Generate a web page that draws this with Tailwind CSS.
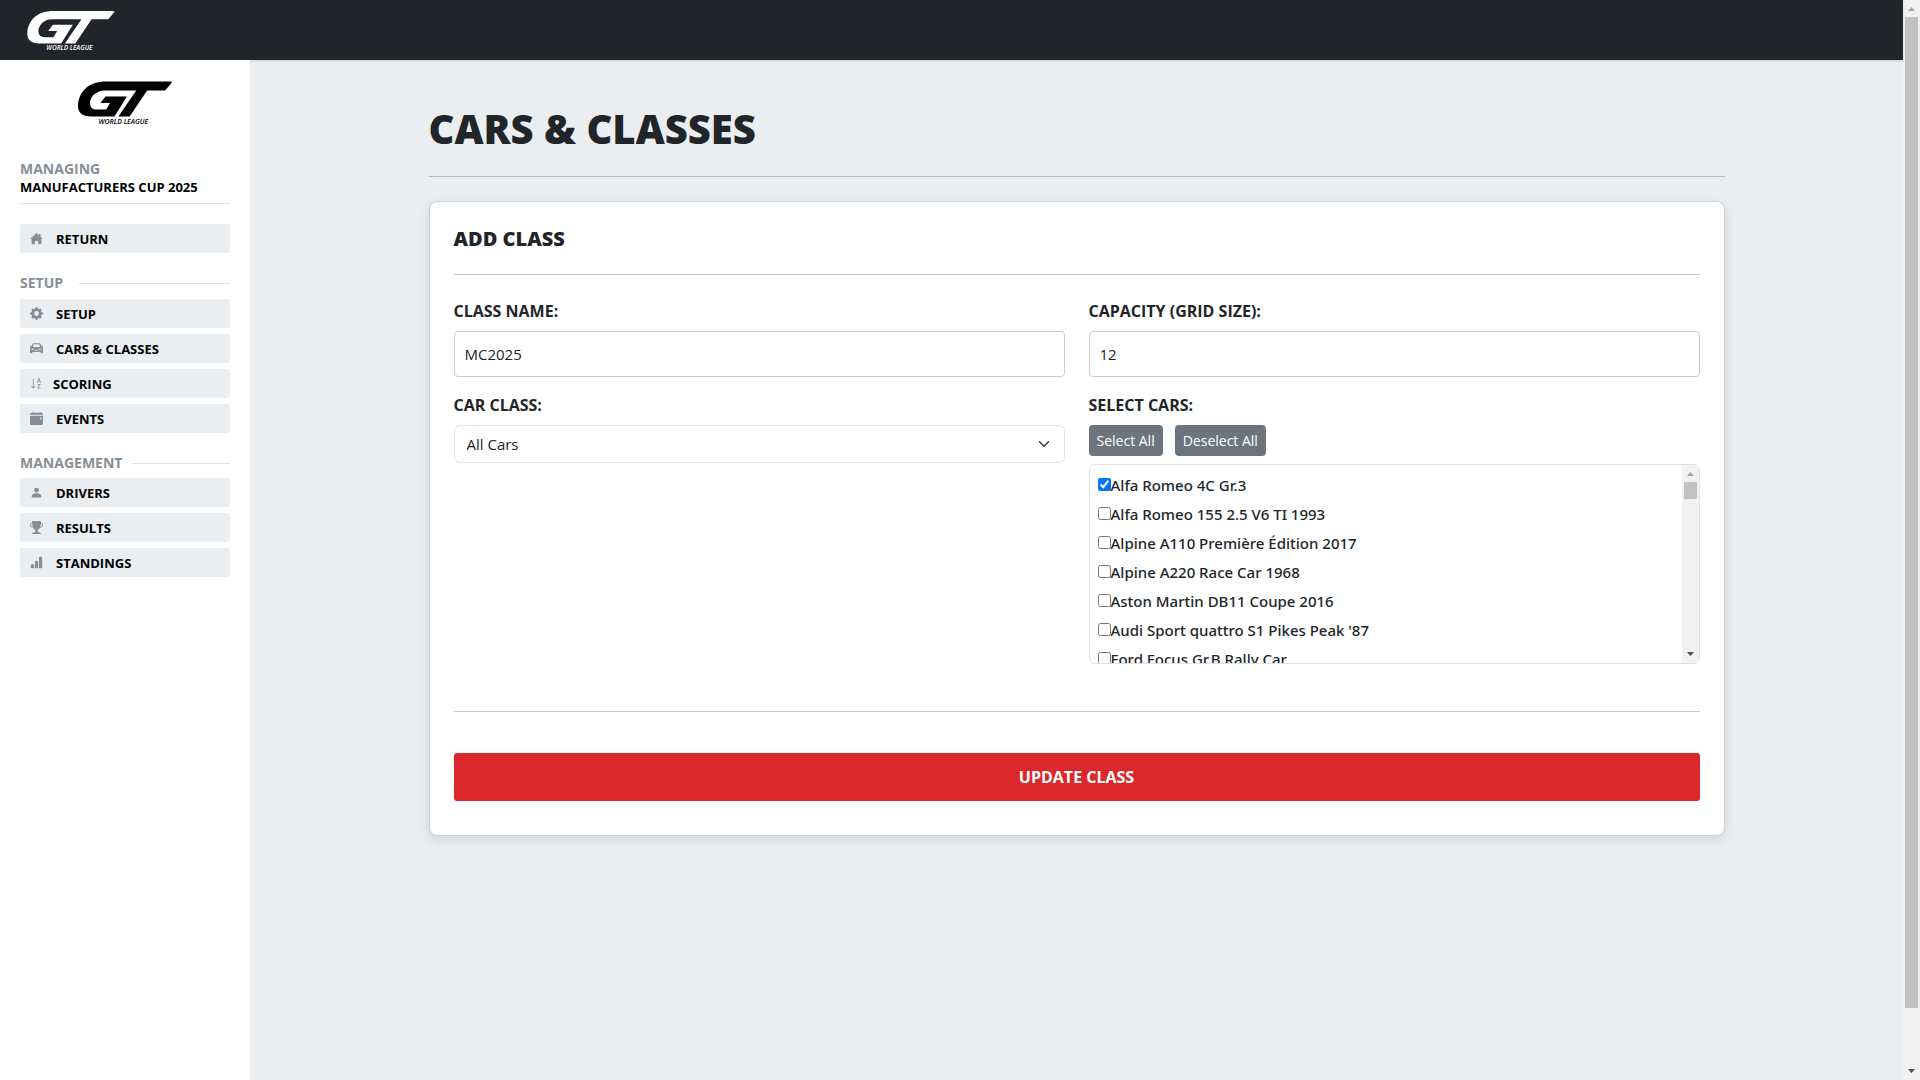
<!DOCTYPE html>
<html lang="en">
<head>
<meta charset="utf-8">
<meta name="viewport" content="width=device-width, initial-scale=1">
<title>Cars &amp; Classes</title>
<script src="https://cdn.jsdelivr.net/npm/@tailwindcss/browser@4"></script>
</head>
<body class="flex h-screen overflow-hidden bg-[#eaeef1] font-['Open_Sans','Noto_Sans',sans-serif] text-[#212529]">
<svg class="hidden" aria-hidden="true">
  <symbol id="logo" viewBox="234 243 284 130">
    <path d="M512 243Q520 243 516 248L497 270H443L390 349H356L410 270H314C288 270 270 290 270 309Q271 328 290 328H319L331 308H302L317 288H382L344 349H274C245 349 233 336 234 314C237 270 270 243 318 243Z"/>
    <text x="296" y="370" font-size="21" font-weight="600" font-style="italic" font-family="'Open Sans',sans-serif">WORLD LEAGUE</text>
  </symbol>
</svg>

<div class="flex min-w-0 flex-1 flex-col">
  <header class="z-10 flex h-[60px] shrink-0 items-center bg-[#212529] px-[27px] pt-0.5 shadow-sm">
    <a href="#" aria-label="GT World League"><svg class="h-10 w-[88px] fill-white"><use href="#logo"/></svg></a>
  </header>

  <div class="flex min-h-0 flex-1">
    <aside class="z-20 flex w-[250px] shrink-0 flex-col bg-white px-5 pt-[21px] text-[13px] leading-[18px] font-bold text-black">
      <a href="#" class="mx-auto" aria-label="GT World League"><svg class="h-11 w-[94px] fill-black"><use href="#logo"/></svg></a>
      <div class="mt-[35px] border-b border-[#dee2e6] pb-[7px]">
        <p class="text-sm leading-[18px] text-[#868e96]">MANAGING</p>
        <p>MANUFACTURERS CUP 2025</p>
      </div>
      <nav class="mt-5 flex flex-col gap-1.5">
        <a href="#" class="flex h-[29px] items-center rounded-[3px] bg-[#eaeef1] px-2.5"><svg class="mr-[13px] size-[13px] fill-[#868e96]" viewBox="0 0 16 16"><path d="M8.7 1.5a1 1 0 0 0-1.4 0L.6 8.1l.8.8L8 2.3l6.6 6.6.8-.8L13 5.7V2.5h-2v1.3z"/><path d="m8 2.300 6 6v5.200a1.5 1.5 0 0 1-1.500 1.500H10v-4H6v4H3.500A1.500 1.500 0 0 1 2 13.500V8.300z"/></svg>RETURN</a>
      </nav>
      <div class="mt-[21px] flex items-center gap-4 text-sm leading-[18px] text-[#868e96]"><h2>SETUP</h2><span class="h-px flex-1 bg-[#dee2e6]"></span></div>
      <nav class="mt-[7px] flex flex-col gap-1.5">
        <a href="#" class="flex h-[29px] items-center rounded-[3px] bg-[#eaeef1] px-2.5"><svg class="mr-[13px] size-[13px] fill-[#868e96]" viewBox="0 0 16 16"><path d="M9.405 1.050c-.413-1.400-2.397-1.400-2.810 0l-.1.340a1.464 1.464 0 0 1-2.105.872l-.310-.170c-1.283-.698-2.686.705-1.987 1.987l.169.311c.446.820.023 1.841-.872 2.105l-.340.100c-1.400.413-1.400 2.397 0 2.810l.340.100a1.464 1.464 0 0 1 .872 2.105l-.170.310c-.698 1.283.705 2.686 1.987 1.987l.311-.169a1.464 1.464 0 0 1 2.105.872l.100.340c.413 1.400 2.397 1.400 2.810 0l.100-.340a1.464 1.464 0 0 1 2.105-.872l.310.170c1.283.698 2.686-.705 1.987-1.987l-.169-.311a1.464 1.464 0 0 1 .872-2.105l.340-.100c1.400-.413 1.400-2.397 0-2.810l-.340-.100a1.464 1.464 0 0 1-.872-2.105l.170-.310c.698-1.283-.705-2.686-1.987-1.987l-.311.169a1.464 1.464 0 0 1-2.105-.872zM8 10.930a2.929 2.929 0 1 1 0-5.860 2.929 2.929 0 0 1 0 5.858z"/></svg>SETUP</a>
        <a href="#" class="flex h-[29px] items-center rounded-[3px] bg-[#eaeef1] px-2.5"><svg class="mr-[13px] size-[13px] fill-[#868e96]" viewBox="0 0 16 16"><path fill-rule="evenodd" d="M4.800 1.500h6.400q1.300 0 1.900 1.200L14.300 5H16v1.200l-.8.500q.8.900.8 2.300V13q0 .8-.8.800h-1.400q-.8 0-.8-.8v-.8H3v.8q0 .8-.8.800H.8Q0 13.800 0 13V9q0-1.400.8-2.300L0 6.200V5h1.700l1.200-2.300q.6-1.200 1.900-1.200zM4.700 2.900 3.500 6h9l-1.200-3.100zM2 8.200v1.400h2.800V8.200zm9.200 0v1.400H14V8.200zM5.500 9.500v1h5v-1z"/></svg>CARS &amp; CLASSES</a>
        <a href="#" class="flex h-[29px] items-center rounded-[3px] bg-[#eaeef1] px-2.5"><svg class="mr-[10px] size-[13px] fill-[#868e96]" viewBox="0 0 16 16"><path fill-rule="evenodd" d="M10.082 5.629 9.664 7H8.598l1.789-5.332h1.234L13.402 7h-1.120l-.419-1.371zm1.570-.785L11 2.687h-.047l-.652 2.157z"/><path d="M12.960 14H9.028v-.691l2.579-3.720v-.054H9.098v-.867h3.785v.691l-2.567 3.720v.054h2.645zM4.500 2.500a.5.500 0 0 0-1 0v9.793l-1.146-1.147a.5.500 0 0 0-.708.708l2 1.999.007.007a.497.497 0 0 0 .7-.006l2-2a.5.500 0 0 0-.707-.708L4.500 12.293z"/></svg>SCORING</a>
        <a href="#" class="flex h-[29px] items-center rounded-[3px] bg-[#eaeef1] px-2.5"><svg class="mr-[13px] size-[13px] fill-[#868e96]" viewBox="0 0 16 16"><path fill-rule="evenodd" d="M4 .5V0H3v1H2a2 2 0 0 0-2 2v.5h16V3a2 2 0 0 0-2-2h-1V0h-1v1H4zM16 14V4.500H0V14a2 2 0 0 0 2 2h12a2 2 0 0 0 2-2zM12.500 7h1q.5 0 .5.500v1q0 .5-.5.500h-1q-.5 0-.5-.5v-1q0-.5.5-.5z"/></svg>EVENTS</a>
      </nav>
      <div class="mt-[21px] flex items-center gap-2.5 text-sm leading-[18px] text-[#868e96]"><h2>MANAGEMENT</h2><span class="h-px flex-1 bg-[#dee2e6]"></span></div>
      <nav class="mt-1.5 flex flex-col gap-1.5">
        <a href="#" class="flex h-[29px] items-center rounded-[3px] bg-[#eaeef1] px-2.5"><svg class="mr-[13px] size-[13px] fill-[#868e96]" viewBox="0 0 16 16"><path d="M3 14s-1 0-1-1 1-4 6-4 6 3 6 4-1 1-1 1zm5-6a3 3 0 1 0 0-6 3 3 0 0 0 0 6"/></svg>DRIVERS</a>
        <a href="#" class="flex h-[29px] items-center rounded-[3px] bg-[#eaeef1] px-2.5"><svg class="mr-[13px] size-[13px] fill-[#868e96]" viewBox="0 0 16 16"><path d="M2.500.5A.5.500 0 0 1 3 0h10a.5.500 0 0 1 .5.500q0 .807-.034 1.536a3 3 0 1 1-1.133 5.890c-.790 1.865-1.878 2.777-2.833 3.011v2.173l1.425.356c.194.048.377.135.537.255L13.300 15.100a.5.500 0 0 1-.3.900H3a.5.500 0 0 1-.3-.9l1.838-1.379c.160-.120.343-.207.537-.255L6.500 13.110v-2.173c-.955-.234-2.043-1.146-2.833-3.012a3 3 0 1 1-1.132-5.890A33 33 0 0 1 2.500.5m.099 2.540a2 2 0 0 0 .720 3.935c-.333-1.050-.588-2.346-.720-3.935m10.083 3.935a2 2 0 0 0 .720-3.935c-.133 1.590-.388 2.885-.720 3.935"/></svg>RESULTS</a>
        <a href="#" class="flex h-[29px] items-center rounded-[3px] bg-[#eaeef1] px-2.5"><svg class="mr-[13px] size-[13px] fill-[#868e96]" viewBox="0 0 16 16"><path d="M1 11a1 1 0 0 1 1-1h2a1 1 0 0 1 1 1v3a1 1 0 0 1-1 1H2a1 1 0 0 1-1-1zm5-4a1 1 0 0 1 1-1h2a1 1 0 0 1 1 1v7a1 1 0 0 1-1 1H7a1 1 0 0 1-1-1zm5-5a1 1 0 0 1 1-1h2a1 1 0 0 1 1 1v12a1 1 0 0 1-1 1h-2a1 1 0 0 1-1-1z"/></svg>STANDINGS</a>
      </nav>
    </aside>

    <main class="min-w-0 flex-1 overflow-hidden px-3 pt-[45px]">
      <div class="mx-auto max-w-[1296px]">
        <h1 class="text-[40px] leading-12 font-extrabold">CARS &amp; CLASSES</h1>
        <hr class="mt-[23px] border-[#b8bdc0]">
        <form class="mt-6 rounded-lg border border-[#cdd0d3] bg-white px-6 pt-[23px] pb-[34px] shadow-[0_4px_12px_rgba(0,0,0,0.1)]">
          <h2 class="text-xl leading-7 font-extrabold">ADD CLASS</h2>
          <hr class="mt-[21px] border-[#c7c8c9]">
          <div class="mt-6 grid grid-cols-2 gap-x-6 gap-y-4">
            <div>
              <label for="name" class="block text-base leading-6 font-bold">CLASS NAME:</label>
              <input id="name" type="text" value="MC2025" class="mt-2 block h-[46px] w-full rounded border border-[#ccc] px-2.5 text-[15px]">
            </div>
            <div>
              <label for="capacity" class="block text-base leading-6 font-bold">CAPACITY (GRID SIZE):</label>
              <input id="capacity" type="text" value="12" class="mt-2 block h-[46px] w-full rounded border border-[#ccc] px-2.5 text-[15px]">
            </div>
            <div>
              <label for="carclass" class="block text-base leading-6 font-bold">CAR CLASS:</label>
              <div class="relative mt-2">
                <select id="carclass" class="block h-[38px] w-full appearance-none rounded-md border border-[#dee2e6] bg-white px-3 text-[15px]"><option>All Cars</option></select>
                <svg class="pointer-events-none absolute top-[13px] right-[15px] size-3 fill-none stroke-[#343a40]" viewBox="0 0 16 16"><path stroke-linecap="round" stroke-linejoin="round" stroke-width="2" d="m2 5 6 6 6-6"/></svg>
              </div>
            </div>
            <div>
              <p id="cars" class="text-base leading-6 font-bold">SELECT CARS:</p>
              <div class="mt-2 flex gap-3 text-sm text-white">
                <button type="button" class="h-[31px] rounded bg-[#6c757d] px-2">Select All</button>
                <button type="button" class="h-[31px] rounded bg-[#6c757d] px-2">Deselect All</button>
              </div>
              <div role="group" aria-labelledby="cars" class="mt-2 flex h-[200px] overflow-hidden rounded-md border border-[#dee2e6]">
                <div class="flex-1 overflow-y-auto px-2 pt-1.5 font-['Noto_Sans','Open_Sans',sans-serif] text-[15px] leading-[29px] font-medium [scrollbar-width:none]">
                  <label class="flex items-center"><input type="checkbox" checked class="mb-0.5 size-[13px]">Alfa Romeo 4C Gr.3</label>
                  <label class="flex items-center"><input type="checkbox" class="mb-0.5 size-[13px]">Alfa Romeo 155 2.5 V6 TI 1993</label>
                  <label class="flex items-center"><input type="checkbox" class="mb-0.5 size-[13px]">Alpine A110 Première Édition 2017</label>
                  <label class="flex items-center"><input type="checkbox" class="mb-0.5 size-[13px]">Alpine A220 Race Car 1968</label>
                  <label class="flex items-center"><input type="checkbox" class="mb-0.5 size-[13px]">Aston Martin DB11 Coupe 2016</label>
                  <label class="flex items-center"><input type="checkbox" class="mb-0.5 size-[13px]">Audi Sport quattro S1 Pikes Peak '87</label>
                  <label class="flex items-center"><input type="checkbox" class="mb-0.5 size-[13px]">Ford Focus Gr.B Rally Car</label>
                </div>
                <div class="flex w-[17px] flex-col items-center justify-between bg-[#f1f1f1]" aria-hidden="true">
                  <div class="flex flex-col items-center"><svg class="h-[17px] w-[13px] fill-[#a3a3a3]" viewBox="0 0 13 17"><path d="M3 11h7L6.500 7z"/></svg><div class="h-[17px] w-[13px] bg-[#c1c1c1]"></div></div>
                  <svg class="h-[17px] w-[13px] fill-[#505050]" viewBox="0 0 13 17"><path d="M3 6h7L6.500 10z"/></svg>
                </div>
              </div>
            </div>
          </div>
          <hr class="mt-[47px] border-[#c7c8c9]">
          <button type="submit" class="mt-[41px] block h-12 w-full rounded-[3px] bg-[#db282b] text-base font-bold text-white">UPDATE CLASS</button>
        </form>
      </div>
    </main>
  </div>
</div>

<div class="flex w-[17px] shrink-0 flex-col items-center bg-[#f1f1f1]" aria-hidden="true">
  <svg class="h-[17px] w-[13px] shrink-0 fill-[#a3a3a3]" viewBox="0 0 13 17"><path d="M3 11h7L6.500 7z"/></svg>
  <div class="mb-[55px] w-[13px] flex-1 bg-[#c1c1c1]"></div>
  <svg class="h-[17px] w-[13px] shrink-0 fill-[#505050]" viewBox="0 0 13 17"><path d="M3 6h7L6.500 10z"/></svg>
</div>
</body>
</html>
